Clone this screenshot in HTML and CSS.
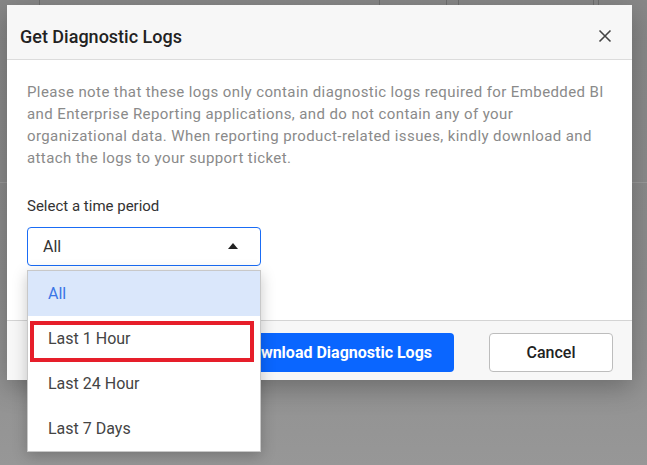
FILE: index.html
```html
<!DOCTYPE html>
<html>
<head>
<meta charset="utf-8">
<link rel="stylesheet" href="styles.css">
</head>
<body>
<div class="page">
  <div class="page-cols">
    <div class="col c1"></div>
    <div class="col c2"></div>
    <div class="col c3"></div>
    <div class="col c4"></div>
    <div class="col c5"></div>
    <div class="col c6"></div>
  </div>
</div>

<div class="dialog">
  <div class="dlg-header">
    <div class="dlg-title">Get Diagnostic Logs</div>
    <svg class="close" width="14" height="14" viewBox="0 0 14 14"><path d="M1.5 1.5 L12.5 12.5 M12.5 1.5 L1.5 12.5" stroke="#444" stroke-width="1.6" fill="none"/></svg>
  </div>
  <div class="dlg-body">
    <p class="note">Please note that these logs only contain diagnostic logs required for Embedded BI and Enterprise Reporting applications, and do not contain any of your organizational data. When reporting product-related issues, kindly download and attach the logs to your support ticket.</p>
    <div class="label">Select a time period</div>
    <div class="select-wrap">
      <div class="select">
        <span>All</span>
        <svg class="caret" width="10" height="6" viewBox="0 0 10 6"><path d="M0 6 L5 0 L10 6 Z" fill="#222"/></svg>
      </div>
      <div class="popup">
        <div class="item active">All</div>
        <div class="item">Last 1 Hour</div>
        <div class="item">Last 24 Hour</div>
        <div class="item">Last 7 Days</div>
        <div class="highlight"></div>
      </div>
    </div>
  </div>
  <div class="dlg-footer">
    <button class="btn primary">Download Diagnostic Logs</button>
    <button class="btn secondary">Cancel</button>
  </div>
</div>
</body>
</html>
```

FILE: styles.css
```css
* { box-sizing: border-box; }
html, body { margin: 0; padding: 0; }
body {
  width: 647px;
  height: 465px;
  overflow: hidden;
  font-family: Roboto, "Liberation Sans", sans-serif;
  background: linear-gradient(180deg, #878787 0%, #8c8c8c 60%, #979797 100%);
  position: relative;
}
.page { width: 100%; height: 100%; }
.page-cols { display: flex; height: 183px; border-bottom: 1px solid #9a9a9a; }
.col { border-right: 1px solid #6f6f6f; }
.c1 { width: 40px; }
.c2 { width: 340px; }
.c3 { width: 67px; }
.c4 { width: 12px; }
.c5 { width: 135px; }
.c6 { width: 5px; }

.dialog {
  position: absolute;
  left: 7px;
  top: 5px;
  width: 625px;
  height: 375px;
  background: #fff;
  display: flex;
  flex-direction: column;
  box-shadow: 0 8px 24px rgba(0,0,0,0.25);
}
.dlg-header {
  height: 55px;
  background: #f7f7f7;
  border-bottom: 1px solid #dcdcdc;
  display: flex;
  align-items: center;
  justify-content: space-between;
  padding: 8px 20px 0 13px;
}
.dlg-title {
  font-size: 18px;
  font-weight: 500;
  color: #222;
}
.close { display: block; }

.dlg-body {
  flex: 1;
  padding: 21px 20px 0 20px;
  position: relative;
}
.note {
  margin: 0;
  font-size: 15px;
  line-height: 22px;
  color: #8a8a8a;
  letter-spacing: 0.4px;
}
.label {
  margin-top: 28px;
  font-size: 15px;
  color: #333;
  line-height: 18px;
}
.select-wrap {
  position: relative;
  margin-top: 12px;
  width: 234px;
}
.select {
  height: 39px;
  border: 1px solid #1a6cf5;
  border-radius: 4px;
  display: flex;
  align-items: center;
  justify-content: space-between;
  padding: 0 22px 0 15px;
  font-size: 16px;
  color: #333;
  background: #fff;
}
.caret { display: block; margin-top: -2px; }

.popup {
  position: absolute;
  left: 0;
  top: 43px;
  width: 234px;
  background: #fff;
  border: 1px solid #c8c8c8;
  box-shadow: 0 4px 14px rgba(0,0,0,0.22);
  z-index: 5;
}
.item {
  height: 45px;
  display: flex;
  align-items: center;
  padding-left: 20px;
  font-size: 16px;
  color: #444;
}
.item.active {
  background: #dae7fb;
  color: #3a76e6;
}
.highlight {
  position: absolute;
  left: 2px;
  top: 50px;
  width: 224px;
  height: 41px;
  border: 4px solid #e61e2a;
}

.dlg-footer {
  height: 60px;
  background: #f7f7f7;
  border-top: 1px solid #d4d4d4;
  display: flex;
  justify-content: flex-end;
  align-items: flex-start;
  gap: 35px;
  padding: 12px 19px 0 0;
}
.btn {
  height: 39px;
  border-radius: 4px;
  font-family: Roboto, "Liberation Sans", sans-serif;
  font-size: 16px;
  cursor: pointer;
}
.btn.primary {
  background: #0a66ff;
  color: #fff;
  border: none;
  font-weight: 700;
  padding: 0 22px;
}
.btn.secondary {
  width: 124px;
  background: #fff;
  border: 1px solid #bdbdbd;
  color: #222;
  font-weight: 500;
}
```
